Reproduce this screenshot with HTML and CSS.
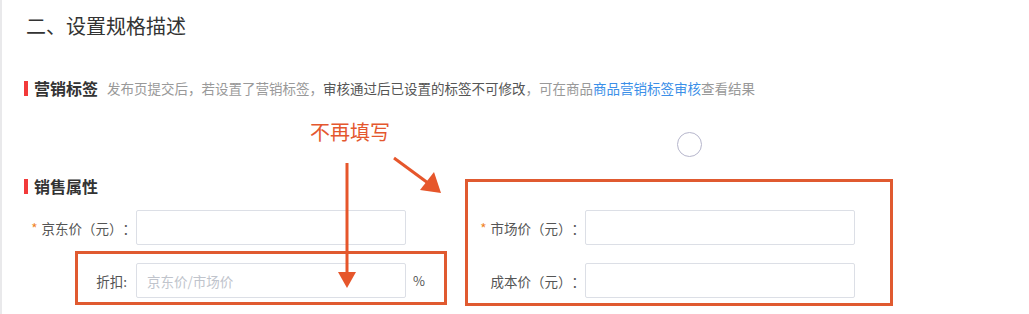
FILE: index.html
```html
<!DOCTYPE html>
<html lang="zh-CN">
<head>
    <meta charset="UTF-8">
    <meta name="viewport" content="width=device-width, initial-scale=1.0">
    <title>设置规格描述</title>
    <link rel="stylesheet" href="styles.css">
</head>
<body>
    <div class="page">
        <h2 class="step-title">二、设置规格描述</h2>

        <div class="section-head marketing">
            <span class="section-title">营销标签</span>
            <span class="section-tip">发布页提交后，若设置了营销标签，<em>审核通过后已设置的标签不可修改</em>，可在商品<a href="#">商品营销标签审核</a>查看结果</span>
        </div>

        <div class="section-head sales">
            <span class="section-title">销售属性</span>
        </div>

        <div class="price-grid">
            <div class="field">
                <label class="field-label required">京东价（元）：</label>
                <input type="text" class="field-input">
            </div>
            <div class="field">
                <label class="field-label required">市场价（元）：</label>
                <input type="text" class="field-input">
            </div>
            <div class="field">
                <label class="field-label short">折扣:</label>
                <input type="text" class="field-input" placeholder="京东价/市场价">
                <span class="field-unit">%</span>
            </div>
            <div class="field">
                <label class="field-label">成本价（元）：</label>
                <input type="text" class="field-input">
            </div>
        </div>

        <!-- annotations drawn over the form -->
        <div class="note-text">不再填写</div>
        <div class="note-box box-discount"></div>
        <div class="note-box box-market"></div>
        <div class="cursor-ring"></div>
        <svg class="note-arrows" width="1029" height="314" viewBox="0 0 1029 314">
            <line x1="347" y1="163" x2="347" y2="274" stroke="#e6562b" stroke-width="3"/>
            <polygon points="338,272 356,272 347,288" fill="#e6562b"/>
            <line x1="394" y1="158" x2="428" y2="183" stroke="#e6562b" stroke-width="3"/>
            <polygon points="420,190 434,172 441,193" fill="#e6562b"/>
        </svg>
    </div>
</body>
</html>
```

FILE: styles.css
```css
body {
    margin: 0;
    background: #fff;
    font-family: "Noto Sans CJK SC", "Noto Sans", sans-serif;
    color: #333;
}

.page {
    position: relative;
    height: 314px;
    padding-left: 24px;
    border-left: 2px solid #e9e9eb;
    box-sizing: border-box;
    overflow: hidden;
}

.step-title {
    margin: 0;
    padding-top: 12px;
    font-size: 20px;
    line-height: 28px;
    font-weight: normal;
    color: #333;
}

.section-head {
    display: flex;
    align-items: center;
    height: 24px;
}

.section-head.marketing { margin-top: 36px; }
.section-head.sales { margin-top: 74px; }

.section-title {
    display: flex;
    align-items: center;
    font-size: 16px;
    font-weight: bold;
    color: #333;
    margin-left: -2px;
}

.section-title::before {
    content: "";
    width: 4px;
    height: 15px;
    margin-right: 6px;
    background: #f23a3a;
}

.section-tip {
    margin-left: 9px;
    font-size: 13.5px;
    color: #999;
}

.section-tip em {
    font-style: normal;
    color: #555;
}

.section-tip a {
    color: #3b8fe8;
    text-decoration: none;
}

.price-grid {
    display: grid;
    grid-template-columns: 449px auto;
    row-gap: 18px;
    margin-top: 12px;
    margin-left: -2px;
}

.field {
    display: flex;
    align-items: center;
    height: 35px;
}

.field-label {
    width: 112px;
    text-align: right;
    font-size: 13.5px;
    color: #555;
    white-space: nowrap;
    text-spacing-trim: space-all;
}

.field-label.short {
    width: 103px;
    padding-right: 9px;
}

.field-label.required::before {
    content: "*";
    margin-right: 4px;
    color: #f0821e;
}

.field-input {
    width: 270px;
    height: 35px;
    box-sizing: border-box;
    padding: 0 10px;
    border: 1px solid #dcdfe6;
    border-radius: 2px;
    font-family: inherit;
    font-size: 13.5px;
    outline: none;
}

.field-input::placeholder { color: #c0c4cc; }

.field-unit {
    margin-left: 7px;
    font-size: 13px;
    color: #555;
}

.note-text {
    position: absolute;
    left: 308px;
    top: 118px;
    font-size: 20px;
    line-height: 28px;
    color: #e4572e;
}

.note-box {
    position: absolute;
    border: 3px solid #e05a30;
    box-sizing: border-box;
}

.box-discount { left: 73px; top: 251px; width: 372px; height: 54px; }
.box-market { left: 463px; top: 179px; width: 428px; height: 127px; }

.cursor-ring {
    position: absolute;
    left: 675px;
    top: 132px;
    width: 25px;
    height: 25px;
    box-sizing: border-box;
    border: 1.5px solid #b6b6cc;
    border-radius: 50%;
}

.note-arrows {
    position: absolute;
    left: -2px;
    top: 0;
}
```
